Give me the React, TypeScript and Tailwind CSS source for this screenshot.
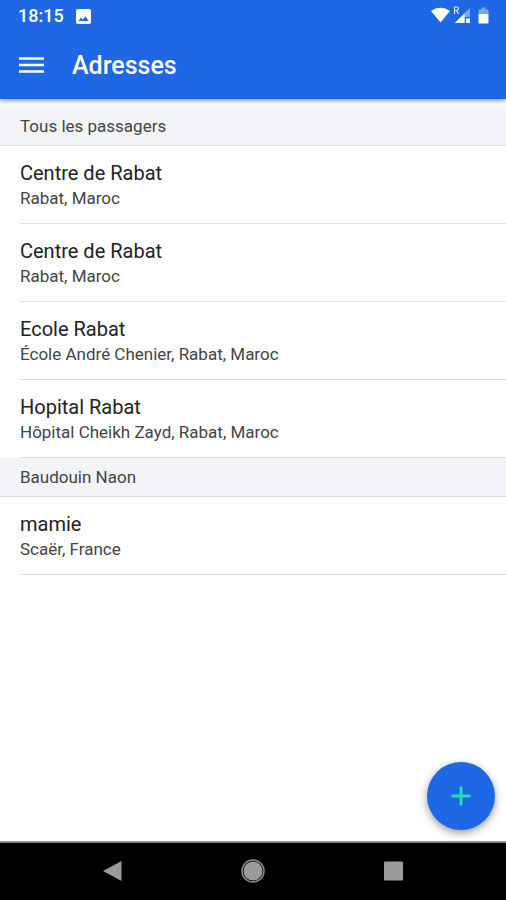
type Address = { name: string; detail: string };
type Section = { title: string; items: Address[] };

const sections: Section[] = [
  {
    title: "Tous les passagers",
    items: [
      { name: "Centre de Rabat", detail: "Rabat, Maroc" },
      { name: "Centre de Rabat", detail: "Rabat, Maroc" },
      { name: "Ecole Rabat", detail: "École André Chenier, Rabat, Maroc" },
      { name: "Hopital Rabat", detail: "Hôpital Cheikh Zayd, Rabat, Maroc" },
    ],
  },
  {
    title: "Baudouin Naon",
    items: [{ name: "mamie", detail: "Scaër, France" }],
  },
];

function StatusBar() {
  return (
    <div className="flex h-8 items-center justify-between pl-[18px] pr-4">
      <div className="flex items-center gap-3">
        <span className="text-[18px] leading-5 font-medium">18:15</span>
        <svg className="size-[15px]" viewBox="0 0 15 15" aria-hidden="true">
          <rect width="15" height="15" rx="2" fill="#fff" />
          <path d="M2.5 12 5 8.6l1.8 2.2 2.6-3.5 3.3 4.7z" fill="#1f68e5" />
        </svg>
      </div>
      <svg className="h-5 w-[60px]" viewBox="0 0 60 20" aria-hidden="true">
        <path d="M1 5C6.5 0.5 14.500 0.5 20 5L10.500 16.500z" fill="#fff" />
        <path d="M24.500 8V1h2.200a1.700 1.700 0 0 1 0 3.500h-2.200M26.500 4.500 28.500 8" fill="none" stroke="#dbe8ff" strokeWidth="1.200" />
        <path d="M40 2v9H35v6H24.500z" fill="#7ba6f1" />
        <path d="M34.500 7.500V17H25z" fill="#fff" />
        <path d="M36 12.500h4V17h-4z" fill="#fff" />
        <path d="M48.500 8V4.500a1 1 0 0 1 1-1h2V1.500h4v2h2a1 1 0 0 1 1 1V8z" fill="#7ba6f1" />
        <path d="M48.500 8h10v8.500a1 1 0 0 1-1 1h-8a1 1 0 0 1-1-1z" fill="#fff" />
      </svg>
    </div>
  );
}

function AppBar() {
  return (
    <header className="z-10 bg-[#1f68e5] text-white shadow-[0_1px_5px_rgba(0,0,0,0.5)]">
      <StatusBar />
      <div className="flex h-[67px] items-center gap-7 px-[18px]">
        <button type="button" aria-label="Menu" className="block">
          <svg className="h-[18px] w-[26px]" viewBox="0 0 26 18" aria-hidden="true">
            <path d="M1 1.500h25M1 8h25M1 14.500h25" stroke="#fff" strokeWidth="2.500" />
          </svg>
        </button>
        <h1 className="text-[25px] leading-8 font-medium">Adresses</h1>
      </div>
    </header>
  );
}

function AddressSection({ title, items }: Section) {
  return (
    <section>
      <h2 className="flex h-[39px] items-center border-b border-[#d9dadc] bg-[#f2f4f8] px-5 text-[17px] leading-6 text-[#444]">
        {title}
      </h2>
      <ul className="pl-5">
        {items.map((item, index) => (
          <li key={index} className="h-[78px] border-b border-[#dedede] pt-[14px]">
            <p className="text-[20px] leading-[26px] text-[#222]">{item.name}</p>
            <p className="text-[17px] leading-6 text-[#444]">{item.detail}</p>
          </li>
        ))}
      </ul>
    </section>
  );
}

function SystemNav() {
  return (
    <nav className="flex h-[59px] items-center justify-between border-t-2 border-[#8c8c8c] bg-black px-[102px] pb-[2px]">
      <button type="button" aria-label="Retour">
        <svg className="size-5" viewBox="0 0 20 20" aria-hidden="true">
          <path d="M19.500 0v20L1 10z" fill="#9b9b9b" />
        </svg>
      </button>
      <button type="button" aria-label="Accueil">
        <svg className="size-6" viewBox="0 0 24 24" aria-hidden="true">
          <circle cx="12" cy="12" r="11" fill="none" stroke="#8c8c8c" strokeWidth="1.500" />
          <circle cx="12" cy="12" r="9.500" fill="#9b9b9b" />
        </svg>
      </button>
      <button type="button" aria-label="Applications récentes">
        <svg className="size-5" viewBox="0 0 20 20" aria-hidden="true">
          <rect x="0" y="0.500" width="19" height="19" rx="1" fill="#9b9b9b" />
        </svg>
      </button>
    </nav>
  );
}

export default function App() {
  return (
    <div className="flex min-h-screen flex-col bg-white font-['Roboto',sans-serif]">
      <AppBar />
      <main className="flex-1">
        <div className="h-2 bg-[#fafbfc]" />
        {sections.map((section) => (
          <AddressSection key={section.title} {...section} />
        ))}
      </main>
      <div className="sticky bottom-0">
        <button
          type="button"
          aria-label="Ajouter une adresse"
          className="absolute right-[11px] bottom-[70px] flex size-[68px] items-center justify-center rounded-full bg-[#1f68e5] shadow-[0_3px_8px_rgba(0,0,0,0.4)]"
        >
          <svg className="size-5" viewBox="0 0 20 20" aria-hidden="true">
            <path d="M10 0.500v19M0.500 10h19" stroke="#1fe0b3" strokeWidth="2.800" />
          </svg>
        </button>
        <SystemNav />
      </div>
    </div>
  );
}
